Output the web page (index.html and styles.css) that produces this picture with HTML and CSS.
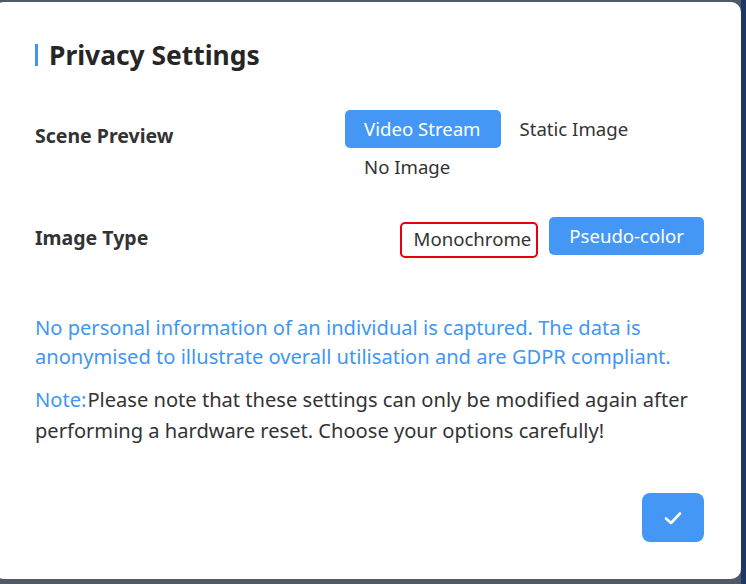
FILE: index.html
```html
<!DOCTYPE html>
<html>
<head>
<meta charset="utf-8">
<link rel="stylesheet" href="styles.css">
</head>
<body>
<div class="dialog">
  <h1 class="title"><span class="title-bar"></span>Privacy Settings</h1>
  <div class="row row-scene">
    <div class="label">Scene Preview</div>
    <div class="options">
      <button class="opt active">Video Stream</button>
      <button class="opt">Static Image</button>
      <button class="opt">No Image</button>
    </div>
  </div>
  <div class="row row-type">
    <div class="label">Image Type</div>
    <div class="options options-end">
      <button class="opt focused">Monochrome</button>
      <button class="opt active wide">Pseudo-color</button>
    </div>
  </div>
  <p class="info">No personal information of an individual is captured. The data is anonymised to illustrate overall utilisation and are GDPR compliant.</p>
  <p class="note"><span class="note-key">Note:</span><span class="note-text">Please note that these settings can only be modified again after performing a hardware reset. Choose your options carefully!</span></p>
  <div class="footer">
    <button class="confirm" aria-label="Confirm">
      <svg width="20" height="16" viewBox="0 0 20 16"><path d="M3 8.5 L8 13 L17 3.5" fill="none" stroke="#fff" stroke-width="2.6" stroke-linecap="round" stroke-linejoin="round"/></svg>
    </button>
  </div>
</div>
</body>
</html>
```
FILE: styles.css
```css
html, body {
  margin: 0;
  padding: 0;
  height: 584px;
  overflow: hidden;
}
body {
  background: linear-gradient(to right, #4f5967 0, #4f5967 741px, #1d3866 741px);
  font-family: "Noto Sans", "Open Sans", sans-serif;
  color: #333;
  padding-top: 2px;
  box-sizing: border-box;
}
.dialog {
  margin-left: -6px;
  width: 747px;
  height: 577px;
  box-sizing: border-box;
  background: #fff;
  border-radius: 10px;
  padding: 36px 37px 0 41px;
  display: flex;
  flex-direction: column;
}
.title {
  margin: 0;
  display: flex;
  align-items: center;
  font-size: 26.4px;
  line-height: 34px;
  font-weight: 700;
  color: #262626;
}
.title-bar {
  width: 3px;
  height: 22px;
  background: #4096f5;
  margin-right: 11px;
}
.row {
  display: flex;
  align-items: flex-start;
  justify-content: space-between;
}
.row-scene {
  margin-top: 38px;
}
.row-type {
  margin-top: 31px;
}
.label {
  font-size: 19.5px;
  font-weight: 700;
  line-height: 26px;
  color: #333;
  flex: none;
}
.row-scene .label {
  margin-top: 13px;
}
.row-type .label {
  margin-top: 8px;
}
.options {
  width: 359px;
  display: flex;
  flex-wrap: wrap;
}
.options-end {
  justify-content: flex-end;
  gap: 11px;
  align-items: flex-start;
}
.opt {
  font-family: inherit;
  font-size: 18.6px;
  line-height: 26px;
  height: 38px;
  padding: 0 20px 0 19px;
  border: none;
  background: transparent;
  color: #333;
  border-radius: 5px;
  cursor: pointer;
}
.opt.wide {
  padding: 0 20px;
}
.opt.active {
  background: #4597f6;
  color: #fff;
}
.opt.focused {
  border: 2px solid #e8000b;
  height: 36px;
  padding: 0 5px 3px 12px;
  margin-top: 5px;
}
.info {
  margin: 55px 0 0;
  font-size: 20.1px;
  line-height: 29px;
  color: #4096f5;
}
.note {
  margin: 13px 0 0;
  font-size: 20.1px;
  line-height: 31px;
  color: #333;
}
.note-key {
  color: #4096f5;
  margin-right: 1px;
}
.footer {
  margin-top: auto;
  margin-bottom: 37px;
  display: flex;
  justify-content: flex-end;
}
.confirm {
  width: 62px;
  height: 49px;
  border: none;
  border-radius: 8px;
  background: #4597f6;
  display: flex;
  align-items: center;
  justify-content: center;
  cursor: pointer;
}
```
